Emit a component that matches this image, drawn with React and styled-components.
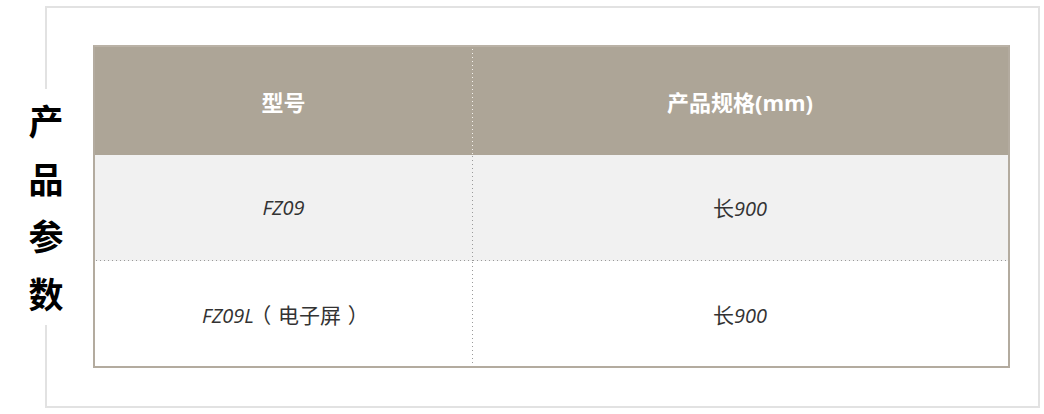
import React from "react";
import styled, { createGlobalStyle } from "styled-components";

const Global = createGlobalStyle`
  html, body { margin: 0; padding: 0; background: #fff; }
  body { font-family: "Open Sans", "Noto Sans CJK SC", sans-serif; }
  * { box-sizing: border-box; }
`;

const Frame = styled.section`
  position: relative;
  margin: 6px 0 0 45px;
  width: 995px;
  height: 402px;
  border: 2px solid #e2e2e2;
  padding: 37px 28px 0 46px;
`;

const SideLabel = styled.h2`
  position: absolute;
  left: -21px;
  top: 81px;
  width: 40px;
  height: 236px;
  margin: 0;
  padding-top: 2px;
  background: #fff;
  display: flex;
  flex-direction: column;
  align-items: center;
  font-family: "Noto Sans CJK SC", sans-serif;
  font-weight: 700;
  font-size: 35px;
  line-height: 57.6px;
  color: #000;
`;

const Table = styled.div`
  width: 917px;
  border: 2px solid #b3ab9f;
  border-top-color: #bab2a6;
  display: grid;
  grid-template-columns: 377px 1fr;
`;

const HeadCell = styled.div`
  height: 108px;
  background-color: #ada597;
  color: #fff;
  font-weight: 700;
  font-size: 22px;
  display: flex;
  align-items: center;
  justify-content: center;
  font-family: "Open Sans", "Noto Sans CJK SC", sans-serif;
  ${(p) =>
    p.$divider
      ? `background-image: linear-gradient(to bottom, #f4f2ee 1px, transparent 1px);
         background-size: 1px 4px; background-repeat: repeat-y; background-position: 0 2px;`
      : ""}
`;

const BodyCell = styled.div`
  height: ${(p) => (p.$last ? 105 : 106)}px;
  background-color: ${(p) => (p.$shade ? "#f1f1f1" : "#fff")};
  color: #333;
  font-size: 20px;
  display: flex;
  align-items: center;
  justify-content: center;
  padding-bottom: ${(p) => (p.$last ? 0 : 2)}px;
  font-family: "Open Sans", "Noto Sans CJK SC", sans-serif;
  ${(p) => {
    const imgs = [];
    const sizes = [];
    const pos = [];
    const rep = [];
    if (p.$divider) {
      imgs.push("linear-gradient(to bottom, #9a9a9a 1px, transparent 1px)");
      sizes.push("1px 4px");
      pos.push("0 1px");
      rep.push("repeat-y");
    }
    if (!p.$last) {
      imgs.push("linear-gradient(to right, #9a9a9a 1px, transparent 1px)");
      sizes.push("4px 1px");
      pos.push("1px 100%");
      rep.push("repeat-x");
    }
    if (!imgs.length) return "";
    return `background-image: ${imgs.join(", ")};
      background-size: ${sizes.join(", ")};
      background-position: ${pos.join(", ")};
      background-repeat: ${rep.join(", ")};`;
  }}
`;

const Latin = styled.em`
  font-style: italic;
  font-family: "Open Sans", sans-serif;
`;

const Cjk = styled.span`
  font-family: "Noto Sans CJK SC", sans-serif;
  font-style: normal;
  font-size: 21px;
`;

const Paren = styled.span`
  display: inline-block;
  width: 24px;
  text-align: center;
  font-family: "Noto Sans CJK SC", sans-serif;
  font-feature-settings: "halt" 1;
  font-style: normal;
  font-size: 21px;
`;

const rows = [
  { model: <Latin>FZ09</Latin>, spec: "900" },
  {
    model: (
      <>
        <Latin>FZ09L</Latin>
        <Paren>（</Paren>
        <Cjk>电子屏</Cjk>
        <Paren>）</Paren>
      </>
    ),
    spec: "900",
  },
];

export default function App() {
  return (
    <>
      <Global />
      <Frame>
        <SideLabel>
          <span>产</span>
          <span>品</span>
          <span>参</span>
          <span>数</span>
        </SideLabel>
        <Table>
          <HeadCell>型号</HeadCell>
          <HeadCell $divider>产品规格(mm)</HeadCell>
          {rows.map((r, i) => (
            <React.Fragment key={i}>
              <BodyCell $shade={i === 0} $last={i === rows.length - 1}>
                <span>{r.model}</span>
              </BodyCell>
              <BodyCell $shade={i === 0} $last={i === rows.length - 1} $divider>
                <span>
                  <Cjk>长</Cjk>
                  <Latin>{r.spec}</Latin>
                </span>
              </BodyCell>
            </React.Fragment>
          ))}
        </Table>
      </Frame>
    </>
  );
}
